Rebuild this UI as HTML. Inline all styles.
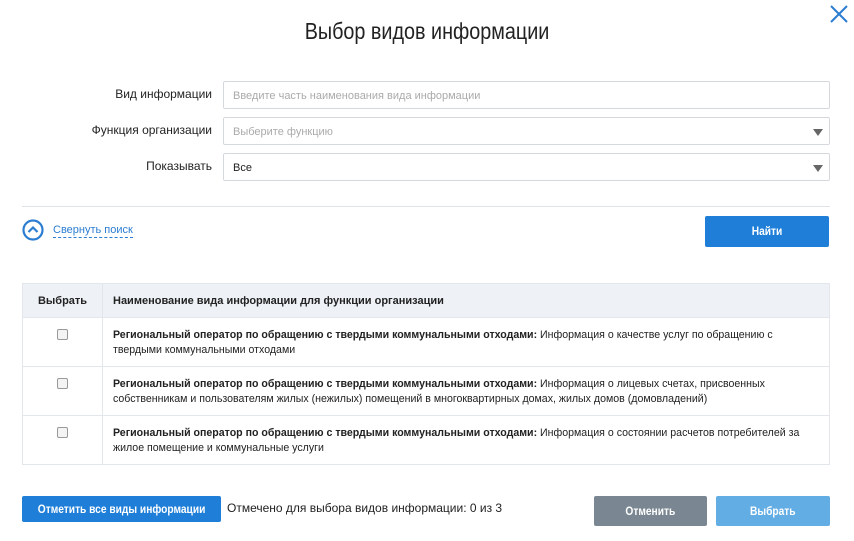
<html><head><style>
body{margin:0;width:854px;height:541px;background:#fff;font-family:"Liberation Sans",sans-serif;position:relative;overflow:hidden;color:#222}
.a{position:absolute}
.lbl{position:absolute;right:642px;font-size:12px;color:#222}
.inp{position:absolute;left:223px;height:28px;border:1px solid #d5d9de;border-radius:2px;font-size:11px;line-height:28px;padding-left:9px;box-sizing:border-box;width:607px}
.tri{position:absolute;right:6px;top:11px;width:0;height:0;border-left:5px solid transparent;border-right:5px solid transparent;border-top:7px solid #666}
.btn{position:absolute;border-radius:2px;color:#fff;font-size:12px;font-weight:bold;text-align:center}
.btn span{display:inline-block;transform:scaleX(0.85)}
table{position:absolute;left:22px;top:283px;width:808px;border-collapse:collapse;font-size:10.6px;table-layout:fixed}
td,th{border:1px solid #e3e6ea;vertical-align:top}
th{background:#eef2f6;height:34px;font-weight:bold;font-size:11px;text-align:left;vertical-align:middle}
td{height:49px;box-sizing:border-box;padding:10px 8px 0 10px;line-height:15px}
.cb{width:9px;height:9px;border:1px solid #999;border-radius:2px;background:#f4f4f4;margin:1px 0 0 34px}
</style></head><body>
<div class="a" style="left:0;width:854px;top:18px;text-align:center;font-size:23px;transform:scaleX(0.86)">Выбор видов информации</div>
<svg class="a" style="left:829px;top:4px" width="20" height="20"><path d="M2 2L18 18M18 2L2 18" stroke="#2b7dd1" stroke-width="2"/></svg>
<div class="lbl" style="top:87px">Вид информации</div>
<div class="lbl" style="top:123px">Функция организации</div>
<div class="lbl" style="top:159px">Показывать</div>
<div class="inp" style="top:81px;color:#aaa">Введите часть наименования вида информации</div>
<div class="inp" style="top:117px;color:#aaa">Выберите функцию<div class="tri"></div></div>
<div class="inp" style="top:153px;color:#222">Все<div class="tri"></div></div>
<div class="a" style="left:22px;top:206px;width:808px;height:1px;background:#e0e3e7"></div>
<svg class="a" style="left:22px;top:219px" width="22" height="22"><circle cx="11" cy="11" r="9.5" fill="none" stroke="#2b7dd1" stroke-width="2.2"/><path d="M6.5 13L11 8.5L15.5 13" fill="none" stroke="#2b7dd1" stroke-width="2.2"/></svg>
<div class="a" style="left:53px;top:224px;font-size:11px;color:#2b7dd1;border-bottom:1px dashed #2b7dd1;line-height:13px">Свернуть поиск</div>
<div class="btn" style="left:705px;top:216px;width:124px;height:31px;line-height:31px;background:#1e7ed8"><span>Найти</span></div>
<table>
<tr><th style="width:77px;text-align:center">Выбрать</th><th style="padding-left:10px">Наименование вида информации для функции организации</th></tr>
<tr><td style="padding-left:0"><div class="cb"></div></td><td><b>Региональный оператор по обращению с твердыми коммунальными отходами:</b> Информация о качестве услуг по обращению с твердыми коммунальными отходами</td></tr>
<tr><td style="padding-left:0"><div class="cb"></div></td><td><b>Региональный оператор по обращению с твердыми коммунальными отходами:</b> Информация о лицевых счетах, присвоенных собственникам и пользователям жилых (нежилых) помещений в многоквартирных домах, жилых домов (домовладений)</td></tr>
<tr><td style="padding-left:0"><div class="cb"></div></td><td><b>Региональный оператор по обращению с твердыми коммунальными отходами:</b> Информация о состоянии расчетов потребителей за жилое помещение и коммунальные услуги</td></tr>
</table>
<div class="btn" style="left:22px;top:496px;width:199px;height:26px;line-height:26px;background:#1e7ed8"><span>Отметить все виды информации</span></div>
<div class="a" style="left:227px;top:501px;font-size:12px">Отмечено для выбора видов информации: 0 из 3</div>
<div class="btn" style="left:594px;top:496px;width:113px;height:30px;line-height:30px;background:#7a8792"><span>Отменить</span></div>
<div class="btn" style="left:716px;top:496px;width:114px;height:30px;line-height:30px;background:#63ade5"><span>Выбрать</span></div>
</body></html>
